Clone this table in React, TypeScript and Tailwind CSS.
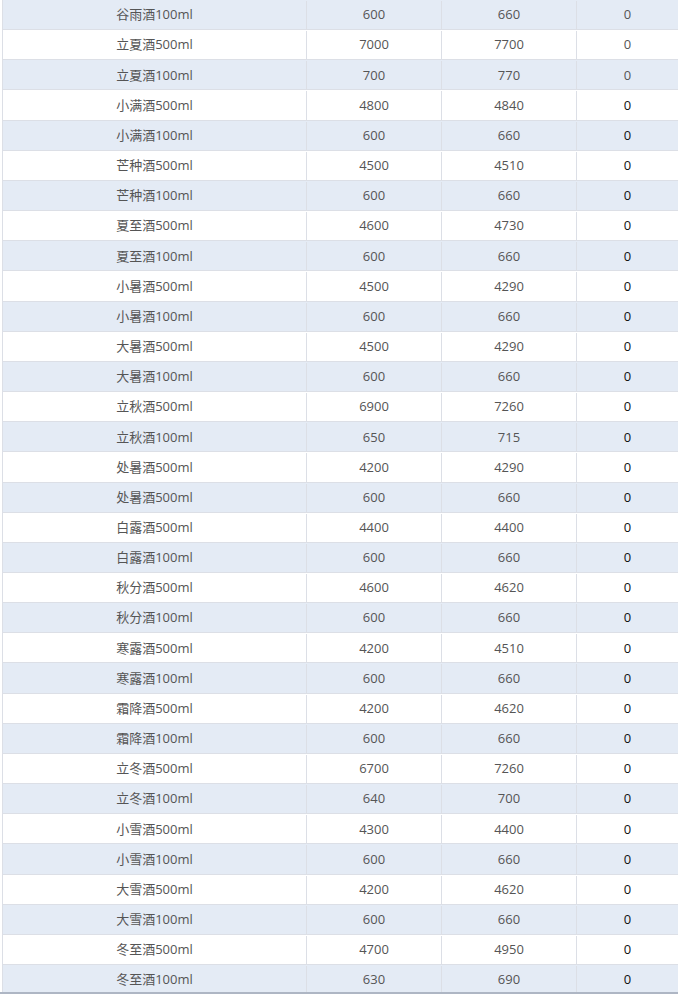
import React from "react";

const rows: [string, number, number][] = [
  ["谷雨酒100ml", 600, 660],
  ["立夏酒500ml", 7000, 7700],
  ["立夏酒100ml", 700, 770],
  ["小满酒500ml", 4800, 4840],
  ["小满酒100ml", 600, 660],
  ["芒种酒500ml", 4500, 4510],
  ["芒种酒100ml", 600, 660],
  ["夏至酒500ml", 4600, 4730],
  ["夏至酒100ml", 600, 660],
  ["小暑酒500ml", 4500, 4290],
  ["小暑酒100ml", 600, 660],
  ["大暑酒500ml", 4500, 4290],
  ["大暑酒100ml", 600, 660],
  ["立秋酒500ml", 6900, 7260],
  ["立秋酒100ml", 650, 715],
  ["处暑酒500ml", 4200, 4290],
  ["处暑酒500ml", 600, 660],
  ["白露酒500ml", 4400, 4400],
  ["白露酒100ml", 600, 660],
  ["秋分酒500ml", 4600, 4620],
  ["秋分酒100ml", 600, 660],
  ["寒露酒500ml", 4200, 4510],
  ["寒露酒100ml", 600, 660],
  ["霜降酒500ml", 4200, 4620],
  ["霜降酒100ml", 600, 660],
  ["立冬酒500ml", 6700, 7260],
  ["立冬酒100ml", 640, 700],
  ["小雪酒500ml", 4300, 4400],
  ["小雪酒100ml", 600, 660],
  ["大雪酒500ml", 4200, 4620],
  ["大雪酒100ml", 600, 660],
  ["冬至酒500ml", 4700, 4950],
  ["冬至酒100ml", 630, 690],
];

export default function App() {
  return (
    <div
      className="h-[994px] w-[678px] overflow-hidden bg-white flex flex-col text-[13px] text-[#555]"
      style={{ fontFamily: '"Open Sans", "Noto Sans CJK SC", sans-serif' }}
    >
      <div className="h-[992px] overflow-hidden pl-[2px]">
        <div className="border-l border-[#dcdfe6]">
          {rows.map(([name, cost, price], i) => (
            <div
              key={i}
              className={`flex h-[30.17px] pt-px border-b border-[#dcdfe6] ${i % 2 === 0 ? "bg-[#e4ebf5]" : "bg-white"}`}
            >
              <div className="w-[304px] border-r border-[#dcdfe6] flex items-center justify-center">{name}</div>
              <div className="w-[135px] border-r border-[#dcdfe6] flex items-center justify-center">{cost}</div>
              <div className="w-[135px] border-r border-[#dcdfe6] flex items-center justify-center">{price}</div>
              <div className={`flex-1 flex items-center justify-center ${i < 3 ? "" : "text-[#111]"}`}>0</div>
            </div>
          ))}
        </div>
      </div>
      <div className="h-[2px] bg-[#aeb6c4]" />
    </div>
  );
}
